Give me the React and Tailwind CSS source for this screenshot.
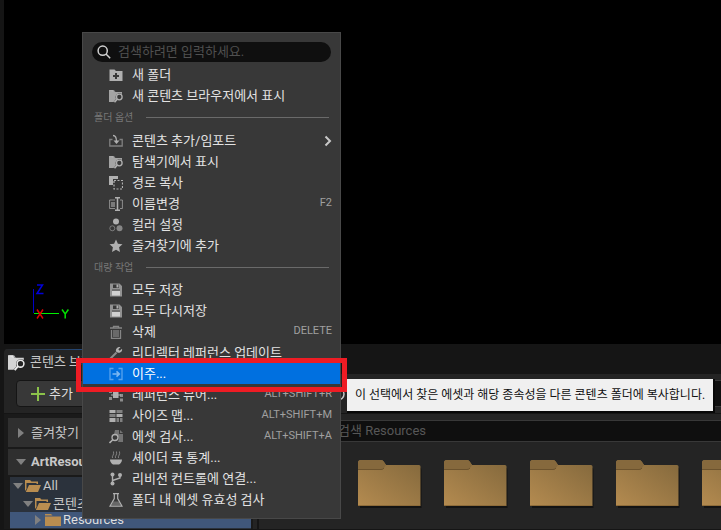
import React from 'react';

const kr = "font-['Roboto','Noto_Sans_CJK_KR',sans-serif]";

const paths = {
  folderPlus: (
    <>
      <path d="M.500 1.500h5L7 3h6.500v10H.500z" />
      <path d="M7 5v6M4 8h6" stroke="#383838" strokeWidth="2" />
    </>
  ),
  folderSearch: (
    <>
      <path d="M0 1h5l1.500 2H4z" opacity=".7" />
      <path d="M0 1h4l1 2h8v2c-4-2-7.500 1-6 5L4.500 13H0z" opacity=".9" />
      <circle cx="10.300" cy="8" r="2.800" fill="none" stroke="currentColor" strokeWidth="1.300" />
      <path d="M8.300 10 5.500 13.300" stroke="currentColor" strokeWidth="1.600" />
    </>
  ),
  import: (
    <g fill="none" stroke="currentColor" strokeWidth="1.300">
      <path d="M3.500 5.500H.800V12h12.400V5.500h-2.700" opacity=".6" />
      <path d="M4 1.500c2.500 0 3.500 1.500 3.500 6" />
      <path d="M4.500 6.500h6L7.500 10z" fill="currentColor" stroke="none" />
    </g>
  ),
  copy: (
    <>
      <path d="M0 0h9v3H4v6H0z" />
      <path d="M5 4.500h8.500V13H5z" fill="none" stroke="currentColor" strokeWidth="1.200" strokeDasharray="2 1.500" />
    </>
  ),
  rename: (
    <>
      <path d="M2 5h4v5H2z" opacity=".55" />
      <path d="M6 3H.600v8.500H6M11 3h2.400v8.500H11" fill="none" stroke="currentColor" opacity=".7" />
      <path d="M6 .800h5M6 13.300h5M8.500 1v12" fill="none" stroke="currentColor" strokeWidth="1.500" />
    </>
  ),
  colors: (
    <>
      <circle cx="7" cy="3.500" r="3" />
      <circle cx="3.300" cy="10.300" r="2.500" fill="none" stroke="currentColor" opacity=".55" />
      <circle cx="10.500" cy="10.300" r="3" opacity=".65" />
    </>
  ),
  star: <path d="m7 .500 1.900 4.200 4.600.500-3.400 3.100.900 4.700L7 10.700 3 13l.900-4.700L.500 5.200l4.600-.500z" />,
  save: (
    <>
      <path fillRule="evenodd" d="M1 .500h9.500L13 3v10.500H1zM4 1.500V5h6V1.500z" opacity=".75" />
      <path d="M7.500 1.500H9.500v3h-2z" />
      <path d="M3 8h8v4.500H3z" fill="#d0d0d0" />
      <path d="M3 7h8" stroke="#484848" />
    </>
  ),
  trash: (
    <g fill="none" stroke="currentColor" opacity=".65">
      <path d="M1 3h12M4.500 3V1.300h5V3" strokeWidth="1.300" />
      <path d="M2.500 5v8.300h9V5M5 5v7M7 5v7M9 5v7" strokeWidth="1.300" />
    </g>
  ),
  wrench: (
    <>
      <path d="m1 13 6.500-6.500" stroke="currentColor" strokeWidth="2" opacity=".7" />
      <path d="M11.500 1.200 9.300 3.300l1.400 1.400L13 2.700c.700 3-2 4.500-4.500 3.800L7 5.500C6.500 3 8.500.500 11.500 1.200z" />
    </>
  ),
  migrate: (
    <g fill="none" stroke="currentColor" strokeWidth="1.300">
      <path d="M4.500 1.500H1v11h3.500M9.500 1.500H13v11H9.500" opacity=".7" />
      <path d="M3.500 7H10M7.500 4.300 10.300 7 7.500 9.700" strokeWidth="1.600" />
    </g>
  ),
  references: (
    <>
      <path d="M4 4h5.500v6H4z" />
      <path d="M0 2h3v3H0zM0 9h3v3H0zM11 1h3v3h-3zM11 6h3v3h-3zM11 10.500h3v3h-3z" opacity=".7" />
      <path d="M2 7h10" stroke="currentColor" />
    </>
  ),
  sizeMap: (
    <>
      <path d="M.500 1h6v3h-6zM.500 9h6v4h-6zM7.500 5h6v3h-6z" />
      <path d="M7.500 1h6v3h-6zM.500 5h6v3h-6zM7.500 9H10v4H7.500zM11 9h2.500v4H11z" opacity=".6" />
    </>
  ),
  audit: (
    <>
      <path d="M6 0h4v4h4v8H9c2-4-.500-8-4-7.500z" opacity=".5" />
      <path d="M11 0v3h3z" opacity=".5" />
      <circle cx="6" cy="7.500" r="3" fill="none" stroke="currentColor" strokeWidth="1.300" />
      <path d="m3.800 9.800-3.300 3.200" stroke="currentColor" strokeWidth="1.600" />
    </>
  ),
  cook: (
    <>
      <path d="M1 8.500h12c0 2.500-1.500 4-3 5H4c-1.500-1-3-2.500-3-5z" />
      <path d="M3.500 7c-1-2 2-3 1-6.500M6.500 7c-1-2 2-3 1-6.500M9.500 7c-1-2 2-3 1-6.500" fill="none" stroke="currentColor" opacity=".6" />
    </>
  ),
  branch: (
    <>
      <path d="M3.500 2v9M11 2.500V6L3.500 8.500" fill="none" stroke="currentColor" strokeWidth="1.400" />
      <circle cx="3.500" cy="2.500" r="2" />
      <circle cx="11" cy="3" r="2" />
      <circle cx="3.500" cy="11.500" r="2" />
    </>
  ),
  flask: (
    <>
      <path d="M4 .700h6M5.300 1v4.500L1 13.200h12L8.700 5.500V1" fill="none" stroke="currentColor" strokeWidth="1.200" />
      <path d="M4.300 8.500h5.400l1.800 3.500h-9z" opacity=".4" />
    </>
  ),
};

function Icon({ name, className = 'size-[14px] text-[#b4b4b4]' }) {
  return (
    <svg viewBox="0 0 14 14" fill="currentColor" className={`shrink-0 ${className}`} aria-hidden="true">
      {paths[name]}
    </svg>
  );
}

function SearchIcon() {
  return (
    <svg viewBox="0 0 14 14" className="size-[14px] shrink-0" fill="none" stroke="#d0d0d0" strokeWidth="1.500" aria-hidden="true">
      <circle cx="5.700" cy="5.700" r="4.600" />
      <path d="m9 9 4.200 4.200" />
    </svg>
  );
}

function MenuItem({ icon, label, shortcut, submenu, active }) {
  return (
    <button
      type="button"
      className={`flex h-[21px] w-full items-center pr-2 pl-[26px] text-left text-[13px] whitespace-nowrap ${
        active ? 'bg-[#0070e0] text-white' : 'text-[#e2e2e2]'
      }`}
    >
      <Icon name={icon} className={active ? 'size-[14px] text-[#7db8f2]' : 'size-[14px] text-[#b0b0b0]'} />
      <span className="ml-[9px] flex-1">{label}</span>
      {shortcut && <span className="text-[11px] text-[#a0a0a0]">{shortcut}</span>}
      {submenu && (
        <svg viewBox="0 0 8 12" className="h-3 w-2" fill="none" stroke="#c8c8c8" strokeWidth="2" aria-hidden="true">
          <path d="m1.500 1.500 4.500 4.500-4.500 4.500" />
        </svg>
      )}
    </button>
  );
}

function MenuHeading({ children }) {
  return (
    <div className="flex h-[23px] items-center pr-[11px] pl-[11px] text-[10px] text-[#777]">
      <span className="w-[52px] shrink-0">{children}</span>
      <span className="h-px flex-1 bg-[#6a6a6a]" />
    </div>
  );
}

function ContextMenu() {
  return (
    <div className="absolute top-8 left-[82px] w-[259px] border border-[#484848] bg-[#383838] pt-[9px] pb-2">
      <label className="mx-[9px] mb-[2px] flex h-5 items-center gap-[7px] rounded-full bg-[#0f0f0f] px-[5px]">
        <SearchIcon />
        <input
          type="text"
          aria-label="검색"
          placeholder="검색하려면 입력하세요."
          className="min-w-0 flex-1 bg-transparent text-[13px] text-white outline-none placeholder:text-[#505050]"
        />
      </label>
      <MenuItem icon="folderPlus" label="새 폴더" />
      <MenuItem icon="folderSearch" label="새 콘텐츠 브라우저에서 표시" />
      <MenuHeading>폴더 옵션</MenuHeading>
      <div className="pt-px">
        <MenuItem icon="import" label="콘텐츠 추가/임포트" submenu />
        <MenuItem icon="folderSearch" label="탐색기에서 표시" />
        <MenuItem icon="copy" label="경로 복사" />
        <MenuItem icon="rename" label="이름변경" shortcut="F2" />
        <MenuItem icon="colors" label="컬러 설정" />
        <MenuItem icon="star" label="즐겨찾기에 추가" />
      </div>
      <MenuHeading>대량 작업</MenuHeading>
      <MenuItem icon="save" label="모두 저장" />
      <MenuItem icon="save" label="모두 다시저장" />
      <MenuItem icon="trash" label="삭제" shortcut="DELETE" />
      <MenuItem icon="wrench" label="리디렉터 레퍼런스 업데이트" />
      <MenuItem icon="migrate" label="이주..." active />
      <MenuItem icon="references" label="레퍼런스 뷰어..." shortcut="ALT+SHIFT+R" />
      <MenuItem icon="sizeMap" label="사이즈 맵..." shortcut="ALT+SHIFT+M" />
      <MenuItem icon="audit" label="에셋 검사..." shortcut="ALT+SHIFT+A" />
      <MenuItem icon="cook" label="셰이더 쿡 통계..." />
      <MenuItem icon="branch" label="리비전 컨트롤에 연결..." />
      <MenuItem icon="flask" label="폴더 내 에셋 유효성 검사" />
    </div>
  );
}

function AxisGizmo() {
  return (
    <svg viewBox="0 0 44 40" className="h-10 w-11" aria-hidden="true">
      <path d="M3.500 8v24" stroke="#0000c8" />
      <path d="M4 32.500h25" stroke="#00f000" />
      <g fill="none" strokeWidth="1.500">
        <path d="M7 4h5.500L7 12.500h6.500" stroke="#0000d8" />
        <path d="m7 28.500 6 9m0-9-6 9" stroke="#e00000" />
        <path d="m32 28.500 3.200 4.500 3.200-4.500m-3.200 4.500v4.500" stroke="#00e000" />
      </g>
    </svg>
  );
}

function Arrow({ open }) {
  return (
    <svg viewBox="0 0 10 10" className="size-[10px] shrink-0" fill="#808080" aria-hidden="true">
      {open ? <path d="M0 2h10L5 8z" /> : <path d="M2 0v10l6-5z" />}
    </svg>
  );
}

function SmallFolder({ open }) {
  return (
    <svg viewBox="0 0 16 12" className="h-3 w-4 shrink-0" fill="#b98d50" aria-hidden="true">
      {open ? (
        <>
          <path d="M0 0h5l1.500 1.500H13V4h-1.500V3H1.500v6L0 11z" />
          <path d="M4 5h12l-3 7H.800z" />
        </>
      ) : (
        <>
          <path d="M0 0h6l1.500 1.500H0z" />
          <path d="M0 2.500h16V12H0z" />
        </>
      )}
    </svg>
  );
}

function FolderTile({ id }) {
  return (
    <svg viewBox="0 0 64 50" className="h-[50px] w-16 shrink-0" role="img" aria-label="폴더">
      <defs>
        <linearGradient id={id} x1="0" y1="1" x2="1" y2="0">
          <stop offset="0" stopColor="#b48b50" />
          <stop offset="1" stopColor="#83683c" />
        </linearGradient>
      </defs>
      <path d="M2 8h60q1.500 0 1.500 2v38H2z" fill="#131313" />
      <path d="M0 3q0-3 3-3h20q2 0 3 2l2 3h33q1.500 0 1.500 1.500V46H0z" fill={`url(#${id})`} />
      <path d="M0 3q0-3 3-3h20q2 0 3 2l2 3-2 3q-1 2-3 2H0z" fill="#86693d" />
      <path d="M0 9.500h23q2 0 3-1.500" fill="none" stroke="#6c532e" />
      <path d="M0 45.500h62" stroke="#8e6c3a" />
    </svg>
  );
}

export default function App() {
  return (
    <div className={`relative flex min-h-screen flex-col overflow-hidden bg-[#151515] pl-1 text-[13px] text-[#c8c8c8] ${kr}`}>
      <div className="flex h-[344px] items-end bg-black pb-[23px] pl-[26px]">
        <AxisGizmo />
      </div>
      <div className="mt-[5px] flex h-[25px]">
        <div className="flex w-[160px] flex-col overflow-hidden rounded-t bg-[#242424]">
          <div className="h-px bg-linear-to-r from-[#242424] to-[#0070e0]" />
          <div className="flex flex-1 items-center gap-[5px] pl-1 whitespace-nowrap">
            <Icon name="folderSearch" className="size-[17px] text-[#e8e8e8]" />
            콘텐츠 브라우저
          </div>
        </div>
      </div>
      <div className="flex h-[39px] items-center justify-between bg-[#242424] pl-3">
        <button type="button" className="flex h-[27px] w-[76px] items-center gap-1 rounded border border-[#151515] bg-[#383838] pl-[14px] text-[#dedede]">
          <svg viewBox="0 0 14 14" className="size-[14px]" stroke="#8bc24a" strokeWidth="2" aria-hidden="true">
            <path d="M7 0v14M0 7h14" />
          </svg>
          추가
        </button>
        <div className="flex items-center gap-1">
          <svg viewBox="0 0 14 14" className="size-[14px]" fill="none" stroke="#c8c8c8" strokeWidth="1.500" aria-hidden="true">
            <circle cx="7" cy="7" r="6" />
          </svg>
          <div className="h-[27px] w-[372px] border border-r-0 border-[#383838] bg-[#0f0f0f]" />
        </div>
      </div>
      <div className="flex flex-1 border-y border-[#151515] bg-[#242424]">
        <div className="flex w-[249px] shrink-0 flex-col bg-[#1a1a1a] pt-1 pl-1">
          <div className="flex h-[29px] items-center gap-[5px] bg-[#2f2f2f] pl-2">
            <Arrow />
            즐겨찾기
          </div>
          <div className="mt-[2px] flex h-[26px] items-center gap-[5px] bg-[#2f2f2f] pl-2 font-bold">
            <Arrow open />
            ArtResources
          </div>
          <div className="mt-[2px] mr-[2px] ml-[2px] flex-1 bg-[#2b323c]">
            <div className="flex h-[18px] items-center gap-[2px] pl-[3px]">
              <Arrow open />
              <SmallFolder open />
              All
            </div>
            <div className="flex h-[17px] items-center gap-[2px] pl-[13px]">
              <Arrow open />
              <SmallFolder open />
              콘텐츠
            </div>
            <div className="flex h-4 items-center gap-[2px] bg-[#40577a] pl-[23px] text-[#dedede]">
              <Arrow />
              <SmallFolder />
              Resources
            </div>
          </div>
        </div>
        <div className="ml-1 min-w-0 flex-1 border-l-2 border-[#151515] pt-[6px]">
          <label className="flex h-[22px] items-center border-y border-[#383838] bg-[#0f0f0f]">
            <input
              type="text"
              aria-label="Resources 검색"
              placeholder="검색 Resources"
              className="min-w-0 flex-1 bg-transparent pl-[79px] text-[13px] outline-none placeholder:text-[#575757]"
            />
          </label>
          <div className="flex gap-[22px] overflow-hidden pt-[18px] pl-[99px]">
            <FolderTile id="f1" />
            <FolderTile id="f2" />
            <FolderTile id="f3" />
            <FolderTile id="f4" />
            <FolderTile id="f5" />
          </div>
        </div>
      </div>
      <ContextMenu />
      <div className="pointer-events-none absolute top-[358px] left-[76px] h-[34px] w-[271px] border-[5px] border-[#ee1c24]" />
      <div
        role="tooltip"
        className="absolute top-[379px] left-[347px] flex h-8 items-center bg-[#f0f0f0] px-2 text-[12px] whitespace-nowrap text-[#111] shadow-[1px_1px_0_1px_#080808]"
      >
        이 선택에서 찾은 에셋과 해당 종속성을 다른 콘텐츠 폴더에 복사합니다.
      </div>
    </div>
  );
}
